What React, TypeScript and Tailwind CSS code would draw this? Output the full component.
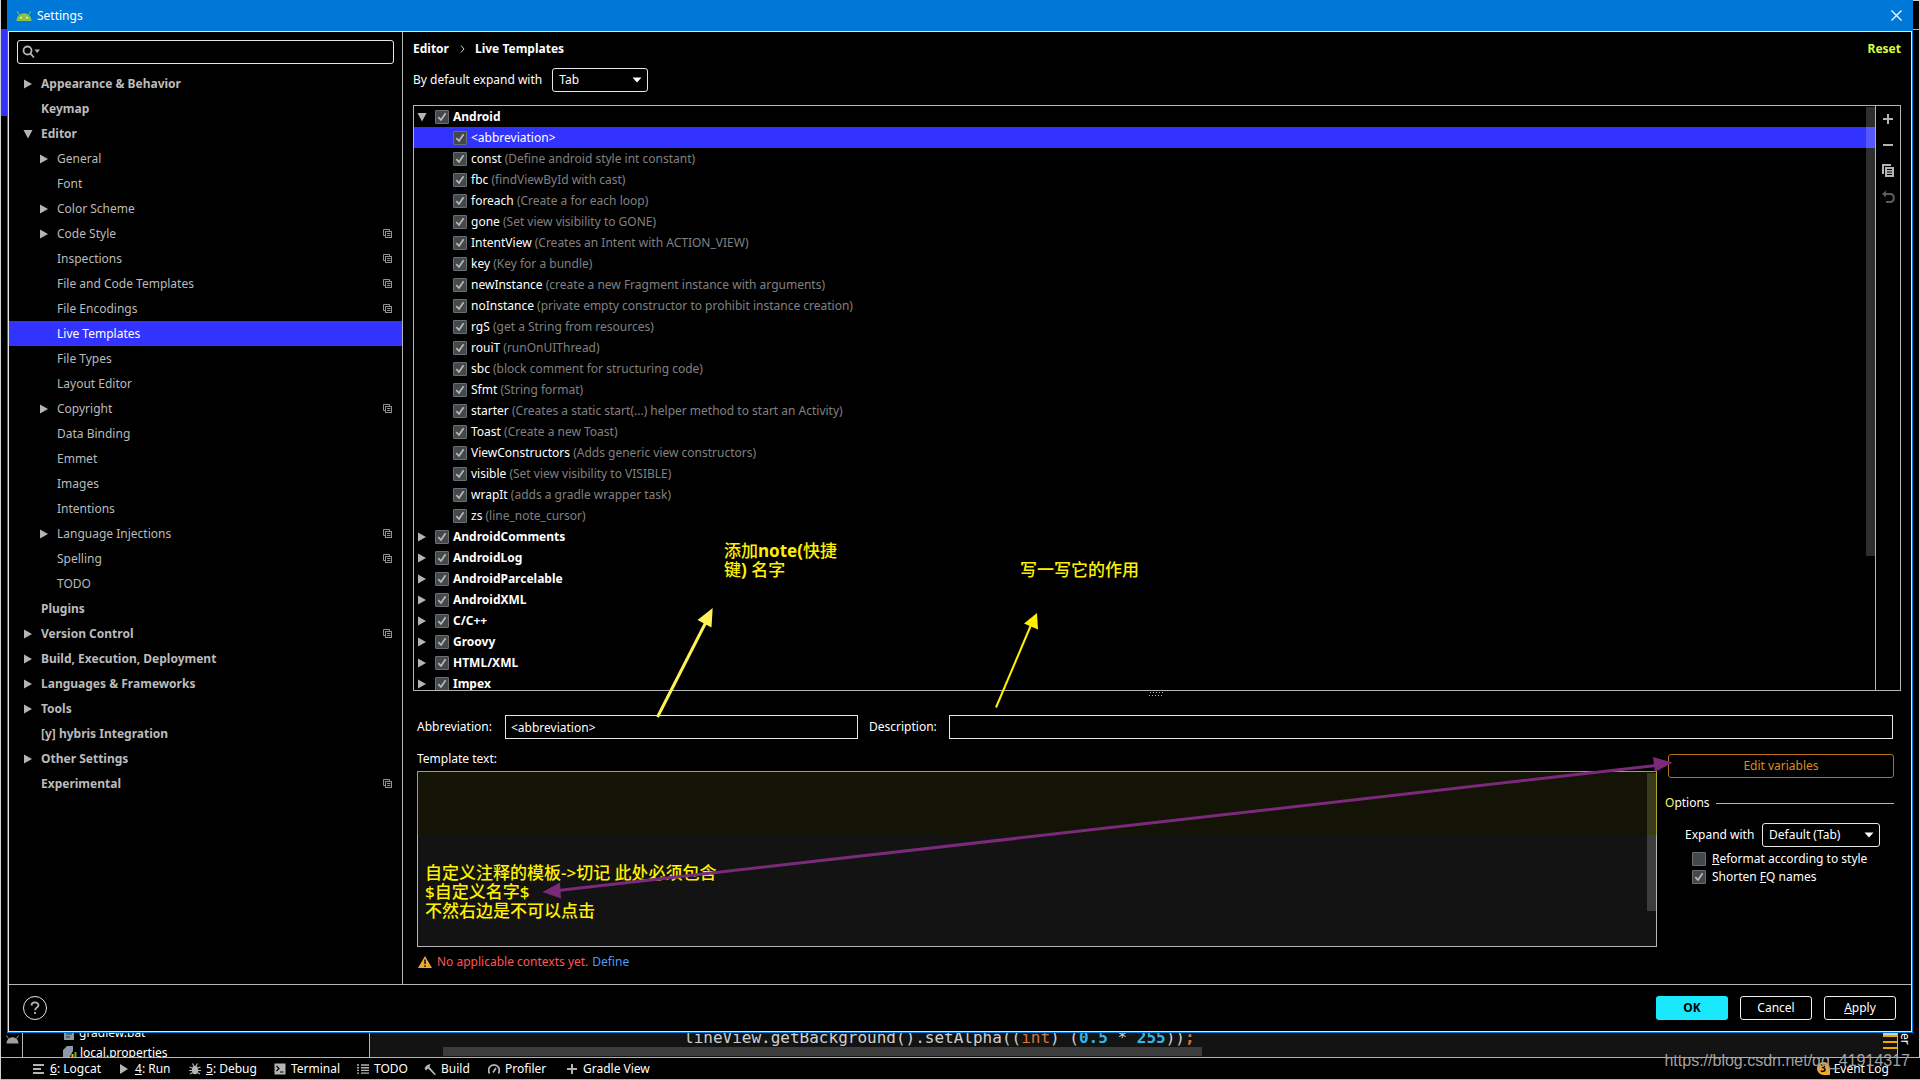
import type { ReactNode } from 'react';

interface NavItem {
  label: string;
  level: 0 | 1;
  arrow?: 'open' | 'closed';
  perProject?: boolean;
  selected?: boolean;
}

const NAV_ITEMS: NavItem[] = [
  { label: 'Appearance & Behavior', level: 0, arrow: 'closed' },
  { label: 'Keymap', level: 0 },
  { label: 'Editor', level: 0, arrow: 'open' },
  { label: 'General', level: 1, arrow: 'closed' },
  { label: 'Font', level: 1 },
  { label: 'Color Scheme', level: 1, arrow: 'closed' },
  { label: 'Code Style', level: 1, arrow: 'closed', perProject: true },
  { label: 'Inspections', level: 1, perProject: true },
  { label: 'File and Code Templates', level: 1, perProject: true },
  { label: 'File Encodings', level: 1, perProject: true },
  { label: 'Live Templates', level: 1, selected: true },
  { label: 'File Types', level: 1 },
  { label: 'Layout Editor', level: 1 },
  { label: 'Copyright', level: 1, arrow: 'closed', perProject: true },
  { label: 'Data Binding', level: 1 },
  { label: 'Emmet', level: 1 },
  { label: 'Images', level: 1 },
  { label: 'Intentions', level: 1 },
  { label: 'Language Injections', level: 1, arrow: 'closed', perProject: true },
  { label: 'Spelling', level: 1, perProject: true },
  { label: 'TODO', level: 1 },
  { label: 'Plugins', level: 0 },
  { label: 'Version Control', level: 0, arrow: 'closed', perProject: true },
  { label: 'Build, Execution, Deployment', level: 0, arrow: 'closed' },
  { label: 'Languages & Frameworks', level: 0, arrow: 'closed' },
  { label: 'Tools', level: 0, arrow: 'closed' },
  { label: '[y] hybris Integration', level: 0 },
  { label: 'Other Settings', level: 0, arrow: 'closed' },
  { label: 'Experimental', level: 0, perProject: true },
];

const TEMPLATES = [
  { name: '<abbreviation>', description: '' },
  { name: 'const', description: '(Define android style int constant)' },
  { name: 'fbc', description: '(findViewById with cast)' },
  { name: 'foreach', description: '(Create a for each loop)' },
  { name: 'gone', description: '(Set view visibility to GONE)' },
  { name: 'IntentView', description: '(Creates an Intent with ACTION_VIEW)' },
  { name: 'key', description: '(Key for a bundle)' },
  { name: 'newInstance', description: '(create a new Fragment instance with arguments)' },
  { name: 'noInstance', description: '(private empty constructor to prohibit instance creation)' },
  { name: 'rgS', description: '(get a String from resources)' },
  { name: 'rouiT', description: '(runOnUIThread)' },
  { name: 'sbc', description: '(block comment for structuring code)' },
  { name: 'Sfmt', description: '(String format)' },
  { name: 'starter', description: '(Creates a static start(...) helper method to start an Activity)' },
  { name: 'Toast', description: '(Create a new Toast)' },
  { name: 'ViewConstructors', description: '(Adds generic view constructors)' },
  { name: 'visible', description: '(Set view visibility to VISIBLE)' },
  { name: 'wrapIt', description: '(adds a gradle wrapper task)' },
  { name: 'zs', description: '(line_note_cursor)' },
];

const GROUPS = [
  'AndroidComments',
  'AndroidLog',
  'AndroidParcelable',
  'AndroidXML',
  'C/C++',
  'Groovy',
  'HTML/XML',
  'Impex',
];

function TreeArrow({ state }: { state?: 'open' | 'closed' }) {
  return (
    <svg width="10" height="10" viewBox="0 0 10 10" className="shrink-0" fill="#b4b4b4">
      {state === 'closed' && <path d="M1 0.5 L9 5 L1 9.5 Z" />}
      {state === 'open' && <path d="M0.5 1 H9.5 L5 9.5 Z" />}
    </svg>
  );
}

function ProjectIcon() {
  return (
    <svg width="10" height="10" viewBox="0 0 10 10" className="shrink-0" fill="none" stroke="#8c9296">
      <path d="M2.5 6.5 H0.5 V0.5 H6.5 V2" />
      <rect x="2.5" y="2.5" width="6" height="6" />
      <path d="M4 4.5 H7.5 M4 6.5 H7.5" />
    </svg>
  );
}

function Check({ id, checked = true }: { id: string; checked?: boolean }) {
  return (
    <span className="relative block h-3.5 w-3.5 shrink-0">
      <input
        id={id}
        type="checkbox"
        defaultChecked={checked}
        className="peer block h-3.5 w-3.5 appearance-none rounded-[1px] border border-[#6b6e70] bg-[#43494b]"
      />
      <svg
        viewBox="0 0 14 14"
        className="pointer-events-none absolute inset-0 hidden h-3.5 w-3.5 peer-checked:block"
        fill="none"
        stroke="#b9bbbc"
        strokeWidth="1.7"
      >
        <path d="M3.3 7.2 L6 10 L10.6 3.2" />
      </svg>
    </span>
  );
}

function Dropdown({ id, value, className }: { id: string; value: string; className: string }) {
  return (
    <span className={`relative block h-6 ${className}`}>
      <select
        id={id}
        className="block h-6 w-full appearance-none rounded-[3px] border border-[#e6e6e6] bg-black pl-1.5 text-white"
      >
        <option>{value}</option>
      </select>
      <svg
        width="10"
        height="6"
        viewBox="0 0 10 6"
        className="pointer-events-none absolute top-[9px] right-1.5"
        fill="#ffffff"
      >
        <path d="M0.5 0.5 H9.5 L5 5.5 Z" />
      </svg>
    </span>
  );
}

function TitleBar() {
  return (
    <header className="flex h-[31px] shrink-0 items-center bg-[#0078d7] pr-1.5 pl-2 text-white">
      <svg width="16" height="12" viewBox="0 0 16 12" fill="#8bc34a">
        <path d="M0.5 11 C0.5 6 4 3.2 8 3.2 C12 3.2 15.5 6 15.5 11 Z" />
        <path d="M3 4.5 L1.2 1 M13 4.5 L14.8 1" stroke="#8bc34a" />
        <circle cx="5" cy="7.6" r="0.9" fill="#ffffff" />
        <circle cx="11" cy="7.6" r="0.9" fill="#ffffff" />
      </svg>
      <h1 className="ml-[5px] flex-1">Settings</h1>
      <button type="button" aria-label="Close" className="p-1">
        <svg width="11" height="11" viewBox="0 0 11 11" stroke="#ffffff" strokeWidth="1.2">
          <path d="M0.5 0.5 L10.5 10.5 M10.5 0.5 L0.5 10.5" />
        </svg>
      </button>
    </header>
  );
}

function Sidebar() {
  return (
    <nav className="flex w-[394px] shrink-0 flex-col border-r border-[#b4b4b4] pt-2 text-[#bbbbbb]">
      <label className="mr-2 ml-2 flex h-6 shrink-0 items-center rounded-[3px] border border-[#e6e6e6] pl-1">
        <svg width="19" height="14" viewBox="0 0 19 14" fill="none" stroke="#b4b4b4" strokeWidth="1.8">
          <circle cx="5.5" cy="5.5" r="4" />
          <path d="M8.4 8.6 L12 12.5" />
          <path d="M12.5 4.5 H18 L15.2 8 Z" fill="#b4b4b4" stroke="none" />
        </svg>
        <input type="text" aria-label="Search settings" className="min-w-0 flex-1 bg-transparent outline-none" />
      </label>
      <ul className="mt-[7px]">
        {NAV_ITEMS.map((item) => (
          <li
            key={item.label}
            className={`flex h-[25px] items-center pr-[9px] ${item.level === 0 ? 'pl-3.5 font-bold' : 'pl-[30px]'} ${
              item.selected ? 'bg-[#3333ff] text-white' : ''
            }`}
          >
            <TreeArrow state={item.arrow} />
            <span className="ml-2 flex-1">{item.label}</span>
            {item.perProject && <ProjectIcon />}
          </li>
        ))}
      </ul>
    </nav>
  );
}

function ToolButton({ label, children }: { label: string; children: ReactNode }) {
  return (
    <button type="button" aria-label={label} className="flex h-[26px] w-6 items-center justify-center">
      <svg width="14" height="14" viewBox="0 0 14 14" fill="none">
        {children}
      </svg>
    </button>
  );
}

function TemplateTree() {
  return (
    <div className="mt-[13px] flex min-h-0 flex-1 border border-[#b4b4b4]">
      <div className="relative min-w-0 flex-1 overflow-hidden">
        <ul>
          <li className="flex h-[21px] items-center pl-[3px] font-bold text-white">
            <TreeArrow state="open" />
            <span className="w-2" />
            <Check id="group-android" />
            <label htmlFor="group-android" className="ml-1">
              Android
            </label>
          </li>
          {TEMPLATES.map((template, index) => (
            <li
              key={template.name}
              className={`flex h-[21px] items-center pl-[39px] ${index === 0 ? 'bg-[#3333ff]' : ''}`}
            >
              <Check id={`template-${index}`} />
              <label htmlFor={`template-${index}`} className="ml-1 whitespace-pre text-[#808080]">
                <span className="text-white">{template.name}</span> {template.description}
              </label>
            </li>
          ))}
          {GROUPS.map((group) => (
            <li key={group} className="flex h-[21px] items-center pl-[3px] font-bold text-white">
              <TreeArrow state="closed" />
              <span className="w-2" />
              <Check id={`group-${group}`} />
              <label htmlFor={`group-${group}`} className="ml-1">
                {group}
              </label>
            </li>
          ))}
        </ul>
        <div className="absolute top-px right-0 h-[449px] w-[9px] bg-white/18" />
      </div>
      <div className="w-[25px] shrink-0 border-l border-[#b4b4b4]">
        <ToolButton label="Add">
          <path d="M7 2 V12 M2 7 H12" stroke="#b4b4b4" strokeWidth="2" />
        </ToolButton>
        <ToolButton label="Remove">
          <path d="M2 7 H12" stroke="#b4b4b4" strokeWidth="2" />
        </ToolButton>
        <ToolButton label="Duplicate">
          <path d="M2 10 V1 H10" stroke="#b4b4b4" strokeWidth="2" />
          <rect x="4" y="3" width="9" height="10" fill="#b4b4b4" />
          <path d="M6 5.5 H11 M6 8 H11 M6 10.5 H11" stroke="#000000" />
        </ToolButton>
        <ToolButton label="Restore">
          <path d="M3 4 H9 C14 4 14 12 9 12 H5" stroke="#5c5c5c" strokeWidth="2" />
          <path d="M1 4 L5 0.5 V7.5 Z" fill="#5c5c5c" />
        </ToolButton>
      </div>
    </div>
  );
}

function TemplateForm() {
  return (
    <>
      <div className="flex h-6 shrink-0 justify-center pt-px">
        <svg width="16" height="4" viewBox="0 0 16 4" stroke="#b4b4b4" strokeDasharray="1 2">
          <path d="M1 0.5 H15" />
          <path d="M0 3.5 H15" />
        </svg>
      </div>
      <div className="flex shrink-0 items-center pr-2 pl-1 text-white">
        <label htmlFor="abbreviation" className="w-[88px]">
          Abbreviation:
        </label>
        <input
          id="abbreviation"
          type="text"
          defaultValue="<abbreviation>"
          className="h-6 w-[353px] border border-[#e6e6e6] bg-black px-[5px]"
        />
        <label htmlFor="description" className="ml-[11px] w-20">
          Description:
        </label>
        <input id="description" type="text" className="h-6 min-w-0 flex-1 border border-[#e6e6e6] bg-black px-[5px]" />
      </div>
      <div className="flex shrink-0 pr-[7px] pb-[13px] pl-1 text-white">
        <div className="min-w-0 flex-1 pt-2.5">
          <label htmlFor="template-text" className="block h-[22px] leading-5">
            Template text:
          </label>
          <div className="relative">
            <textarea
              id="template-text"
              className="block h-44 w-full resize-none border border-[#b4b4b4] bg-[#131313]"
            />
            <div className="pointer-events-none absolute top-0 right-0 left-0 h-16 border-x border-t border-[#aaa632] bg-[#131306]" />
            <div className="absolute top-0.5 right-px h-[62px] w-[9px] bg-[#393a1a]" />
            <div className="absolute top-16 right-px h-[76px] w-[9px] bg-[#3c3c3c]" />
          </div>
          <p className="mt-1.5 flex h-[18px] items-center">
            <svg width="16" height="14" viewBox="0 0 16 14">
              <path d="M8 1 L15 13 H1 Z" fill="#f0a732" />
              <path d="M8 4.5 V9 M8 10.3 V12" stroke="#2b2b2b" strokeWidth="1.8" />
            </svg>
            <span className="ml-1 text-[#ff5555]">No applicable contexts yet.</span>
            <a href="#define" className="ml-1 text-[#4a9cff]">
              Define
            </a>
          </p>
        </div>
        <div className="ml-2 w-[229px] pt-[15px]">
          <div className="pl-[3px]">
            <button
              type="button"
              className="block h-6 w-full rounded-[3px] border border-[#b86e14] text-[#dd8a1e]"
            >
              Edit variables
            </button>
          </div>
          <fieldset className="mt-[15px]">
            <legend className="flex h-5 w-full items-center">
              <span className="text-[#f5f562]">O</span>ptions
              <span className="ml-1.5 h-px flex-1 bg-[#b4b4b4]" />
            </legend>
            <div className="mt-2.5 flex items-center pr-3.5 pl-5">
              <label htmlFor="expand-with">Expand with</label>
              <Dropdown id="expand-with" value="Default (Tab)" className="ml-auto w-[118px]" />
            </div>
            <div className="mt-[3px] flex h-[18px] items-center gap-1.5 pl-[27px]">
              <Check id="reformat" checked={false} />
              <label htmlFor="reformat">
                <u>R</u>eformat according to style
              </label>
            </div>
            <div className="flex h-[18px] items-center gap-1.5 pl-[27px]">
              <Check id="shorten" />
              <label htmlFor="shorten">
                Shorten <u>F</u>Q names
              </label>
            </div>
          </fieldset>
        </div>
      </div>
    </>
  );
}

function Footer() {
  return (
    <footer className="flex h-[47px] shrink-0 items-center gap-3 border-t border-[#b4b4b4] pr-[15px] pl-3.5 text-white">
      <button
        type="button"
        aria-label="Help"
        className="mr-auto flex h-6 w-6 items-center justify-center rounded-full border border-[#e6e6e6]"
      >
        <svg width="12" height="14" viewBox="0 0 12 14" fill="none" stroke="#b4b4b4" strokeWidth="1.8">
          <path d="M2.5 4.5 C2.5 0.5 9.5 0.5 9.5 4.3 C9.5 6.6 6 6.4 6 9.2" />
          <path d="M6 11 V13" />
        </svg>
      </button>
      <button type="button" className="h-6 w-[72px] rounded-[3px] bg-[#1ae8ff] font-bold text-black">
        OK
      </button>
      <button type="button" className="h-6 w-[72px] rounded-[3px] border border-[#f0f0f0]">
        Cancel
      </button>
      <button type="button" className="h-6 w-[72px] rounded-[3px] border border-[#f0f0f0]">
        <u>A</u>pply
      </button>
    </footer>
  );
}

// Part of the IDE window that shows below the dialog
function EditorPeek() {
  return (
    <div className="flex h-6 shrink-0 overflow-hidden">
      <div className="w-[22px] shrink-0 border-r border-[#b4b4b4] pt-0.5 pl-1">
        <svg width="15" height="9" viewBox="0 0 15 9" fill="#a0a0a0">
          <path d="M1.5 8.5 C1.5 4.5 4.5 2.2 7.5 2.2 C10.5 2.2 13.5 4.5 13.5 8.5 Z" />
          <path d="M3.5 3.5 L1.5 0.5 M11.5 3.5 L13.5 0.5" stroke="#a0a0a0" />
        </svg>
      </div>
      <ul className="-mt-2.5 w-[347px] shrink-0 border-r border-[#b4b4b4] pl-10 text-[12px] leading-5 text-white">
        <li className="flex items-center gap-1">
          <svg width="12" height="14" viewBox="0 0 12 14">
            <rect x="1" y="1" width="10" height="13" fill="#8c9aa3" />
            <path d="M3 5 H9 M3 8 H9 M3 11 H7" stroke="#2b2b2b" />
          </svg>
          gradlew.bat
        </li>
        <li className="flex items-center gap-[3px]">
          <svg width="14" height="14" viewBox="0 0 14 14">
            <path d="M4 0 H10 V5 L5 14 H0 V4 Z" fill="#8c9aa3" />
            <path d="M6.5 14 V11" stroke="#f26522" strokeWidth="2" />
            <path d="M9.5 14 V8" stroke="#f4af3d" strokeWidth="2" />
            <path d="M12.5 14 V6" stroke="#62b543" strokeWidth="2" />
          </svg>
          local.properties
        </li>
      </ul>
      <div className="flex min-w-0 flex-1 flex-col bg-[#131313]">
        <code className="-mt-1 block h-[18px] pl-[314px] font-['DejaVu_Sans_Mono',monospace] text-[16px] leading-[18px] whitespace-pre text-[#cfcfcf]">
          lineView.getBackground().setAlpha((<span className="text-[#d9743a]">int</span>) (
          <b className="text-[#33b5e5]">0.5</b> * <b className="text-[#33b5e5]">255</b>))
          <b className="text-[#d9743a]">;</b>
        </code>
        <div className="ml-[73px] h-[9px] w-[759px] bg-[#3c3c3c]" />
      </div>
      <div className="flex w-3.5 shrink-0 flex-col gap-1 bg-[#131313]">
        <span className="h-1 border-b-2 border-[#f2a600] bg-[#cfcfcf]" />
        <span className="h-0.5 bg-[#f2a600]" />
        <span className="h-0.5 bg-[#f2a600]" />
      </div>
      <div className="w-[23px] shrink-0 border-r border-l border-r-[#d0d0d0] border-l-[#b4b4b4] pr-1.5 text-white [writing-mode:vertical-rl]">
        er
      </div>
    </div>
  );
}

function StatusItem({ icon, className, children }: { icon: ReactNode; className: string; children: ReactNode }) {
  return (
    <button type="button" className={`flex shrink-0 items-center gap-[5px] ${className}`}>
      <svg width="12" height="12" viewBox="0 0 12 12" fill="none" stroke="#b4b4b4">
        {icon}
      </svg>
      <span>{children}</span>
    </button>
  );
}

function StatusBar() {
  return (
    <div className="flex h-[23px] shrink-0 items-center border-y border-[#b4b4b4] pl-8 text-white">
      <StatusItem className="w-[85px]" icon={<path d="M0 2 H11 M0 6 H8 M0 10 H11" strokeWidth="2" />}>
        <u>6</u>: Logcat
      </StatusItem>
      <StatusItem className="w-[71px]" icon={<path d="M2 1 L10 6 L2 11 Z" fill="#b4b4b4" stroke="none" />}>
        <u>4</u>: Run
      </StatusItem>
      <StatusItem
        className="w-[85px]"
        icon={
          <>
            <ellipse cx="6" cy="7" rx="3.2" ry="4.3" fill="#b4b4b4" stroke="none" />
            <path d="M0.5 4 L3 5 M11.5 4 L9 5 M0 7.5 H12 M1 11 L3.5 9.5 M11 11 L8.5 9.5 M3.5 0.5 L5 3 M8.5 0.5 L7 3" strokeWidth="1.2" />
          </>
        }
      >
        <u>5</u>: Debug
      </StatusItem>
      <StatusItem
        className="w-[83px]"
        icon={
          <>
            <rect width="11" height="11" x="0.5" y="0.5" fill="#b4b4b4" stroke="none" />
            <path d="M2.5 3 L5 5.5 L2.5 8 M6 9 H9.5" stroke="#000000" strokeWidth="1.2" />
          </>
        }
      >
        Terminal
      </StatusItem>
      <StatusItem
        className="w-[67px]"
        icon={<path d="M0 2 H2 M4 2 H12 M0 4.7 H2 M4 4.7 H12 M0 7.4 H2 M4 7.4 H12 M0 10.1 H2 M4 10.1 H12" strokeWidth="1.4" />}
      >
        TODO
      </StatusItem>
      <StatusItem
        className="w-16"
        icon={<path d="M0.5 5.5 C2 2.5 3.5 1.5 6.5 1 L5.5 4 L12 11.5 L10.5 12 L4 5.5 L2 7.5 Z" fill="#b4b4b4" stroke="none" />}
      >
        Build
      </StatusItem>
      <StatusItem
        className="w-[78px]"
        icon={<path d="M1.5 10.5 C-1 5 3 1.8 6 1.8 C9 1.8 13 5 10.5 10.5 M5 9.5 L8 5" strokeWidth="1.8" />}
      >
        Profiler
      </StatusItem>
      <StatusItem className="mr-auto" icon={<path d="M6 1 V11 M1 6 H11" strokeWidth="2" />}>
        Gradle View
      </StatusItem>
      <button type="button" className="mr-[31px] flex items-center gap-1">
        <span className="h-[13px] w-[13px] rounded-full rounded-br-none bg-[#f0a732] text-center text-[10px] leading-[13px] font-bold text-black">
          3
        </span>
        Event Log
      </button>
    </div>
  );
}

// Hand-drawn notes and arrows laid over the whole screen
function Annotations() {
  return (
    <div className="pointer-events-none absolute inset-y-0 right-0 -left-px overflow-hidden font-['Noto_Sans','Noto_Sans_CJK_SC',sans-serif] text-[17px] leading-[19px] font-medium text-[#fff000]">
      <svg width="1920" height="1080" viewBox="0 0 1920 1080" className="absolute top-0 left-0 max-w-none">
        <path d="M657.5 717 L706 622" stroke="#fff257" strokeWidth="3" />
        <path d="M712.7 608 L697.5 620 L711.5 627.5 Z" fill="#fff257" />
        <path d="M996 707.5 L1031 625" stroke="#fff000" strokeWidth="2" />
        <path d="M1037 613 L1024 623.5 L1038 629.5 Z" fill="#fff000" />
      </svg>
      <p className="absolute top-[541px] left-[724px]">
        添加<b>note(</b>快捷
        <br />
        键<b>)</b> 名字
      </p>
      <p className="absolute top-[560px] left-[1020px]">写一写它的作用</p>
      <p className="absolute top-[863px] left-[425px]">
        自定义注释的模板-&gt;切记 此处必须包含
        <br />
        $自定义名字$
        <br />
        不然右边是不可以点击
      </p>
      <svg width="1920" height="1080" viewBox="0 0 1920 1080" className="absolute top-0 left-0 max-w-none">
        <path d="M558 890.5 L1656 765.5" stroke="#7b2a7b" strokeWidth="3" />
        <path d="M542.5 892 L560 882.5 L561 898.5 Z" fill="#7b2a7b" />
        <path d="M1672.5 762.5 L1653 757 L1655 772 Z" fill="#7b2a7b" />
      </svg>
      <p className="absolute right-2.5 bottom-2.5 font-['Liberation_Sans',sans-serif] text-[16px] font-normal text-[#a0a0a0]">
        https://blog.csdn.net/qq_41914317
      </p>
    </div>
  );
}

export default function App() {
  return (
    <div className="relative flex h-screen flex-col border-l border-[#d0d0d0] bg-black font-['Noto_Sans',sans-serif] text-[12px] leading-4">
      <div className="flex min-h-0 flex-1">
        <div className="w-1.5 shrink-0 pt-[29px]">
          <div className="h-[87px] bg-[#3333ff]" />
        </div>
        <div className="flex min-w-0 flex-1 flex-col border-x border-b border-[#0078d7]">
          <TitleBar />
          <div className="flex min-h-0 flex-1 flex-col border border-[#e6e6e6]">
            <div className="flex min-h-0 flex-1">
              <Sidebar />
              <main className="flex min-w-0 flex-1 flex-col pt-2 pr-2.5 pl-2.5">
                <div className="flex h-[18px] shrink-0 items-center font-bold text-white">
                  <span>Editor</span>
                  <svg width="5" height="8" viewBox="0 0 5 8" className="mr-2.5 ml-[11px]" fill="none" stroke="#d0d0d0">
                    <path d="M1 0.5 L4 4 L1 7.5" />
                  </svg>
                  <span>Live Templates</span>
                  <button type="button" className="ml-auto font-bold text-[#d2ff3c]">
                    Reset
                  </button>
                </div>
                <div className="mt-2.5 flex h-6 shrink-0 items-center gap-2.5 text-white">
                  <label htmlFor="default-expand">By default expand with</label>
                  <Dropdown id="default-expand" value="Tab" className="w-24" />
                </div>
                <TemplateTree />
                <TemplateForm />
              </main>
            </div>
            <Footer />
          </div>
        </div>
        <div className="w-[7px] shrink-0 border-t border-r border-[#d0d0d0]">
          <div className="h-[29px] border-b border-[#b4b4b4]" />
        </div>
      </div>
      <EditorPeek />
      <StatusBar />
      <Annotations />
    </div>
  );
}
